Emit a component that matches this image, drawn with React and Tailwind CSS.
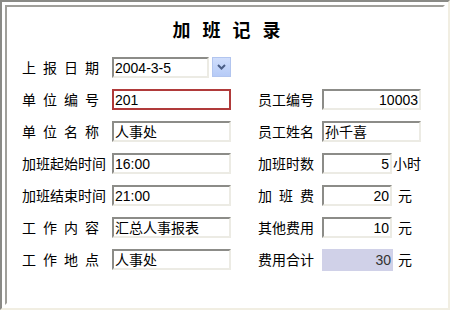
import React from "react";

const FONT = { fontFamily: '"Liberation Sans", "Noto Sans CJK SC", sans-serif' };

function Field({ value, w = "w-[119px]", right = false, red = false }) {
  const border = red
    ? "border-2 border-[#b03a3a]"
    : "border-2 border-t-[#8c8c88] border-l-[#8c8c88] border-r-[#ecebe4] border-b-[#ecebe4]";
  return (
    <div
      className={`${w} h-[21px] bg-white ${border} flex items-center ${right ? "justify-end pr-[1px]" : "pl-[1px]"} text-[14px] leading-none text-black overflow-hidden whitespace-nowrap`}
    >
      {value}
    </div>
  );
}

function Label({ text, spaced = false, w }) {
  return (
    <div
      className={`${w} text-[14px] leading-none text-black whitespace-nowrap ${spaced ? "tracking-[7px]" : ""}`}
    >
      {text}
    </div>
  );
}

function Row({ children }) {
  return <div className="flex items-center h-[21px] pl-[15px]">{children}</div>;
}

export default function App() {
  return (
    <div
      className="w-[450px] h-[310px] bg-white border-2 border-t-[#8a8a86] border-l-[#8a8a86] border-r-[#f1eee2] border-b-[#f1eee2] p-[3px]"
      style={FONT}
    >
      <div className="h-full border-2 border-t-[#a09f9a] border-l-[#a09f9a] border-r-white border-b-white">
        <div className="mt-[14px] h-[20px] flex justify-center gap-[12px] text-[18px] leading-[20px] font-bold text-black pl-[3px]">
          <span>加</span>
          <span>班</span>
          <span>记</span>
          <span>录</span>
        </div>
        <div className="mt-[16px] flex flex-col gap-[11px]">
          <Row>
            <Label text="上报日期" spaced w="w-[90px]" />
            <Field value="2004-3-5" w="w-[97px]" />
            <div className="ml-[3px] w-[19px] h-[20px] self-start bg-gradient-to-b from-[#d0defc] to-[#b6cbf7] border border-[#b2c5ef] flex items-center justify-center">
              <svg width="9" height="6" viewBox="0 0 9 6">
                <path d="M1 1 L4.5 4.5 L8 1" fill="none" stroke="#4b5e86" strokeWidth="2" />
              </svg>
            </div>
          </Row>
          <Row>
            <Label text="单位编号" spaced w="w-[90px]" />
            <Field value="201" red />
            <div className="w-[27px]" />
            <Label text="员工编号" w="w-[64px]" />
            <Field value="10003" w="w-[99px]" right />
          </Row>
          <Row>
            <Label text="单位名称" spaced w="w-[90px]" />
            <Field value="人事处" />
            <div className="w-[27px]" />
            <Label text="员工姓名" w="w-[64px]" />
            <Field value="孙千喜" w="w-[99px]" />
          </Row>
          <Row>
            <Label text="加班起始时间" w="w-[90px]" />
            <Field value="16:00" />
            <div className="w-[27px]" />
            <Label text="加班时数" w="w-[64px]" />
            <Field value="5" w="w-[70px]" right />
            <span className="ml-[1px] text-[14px] leading-none">小时</span>
          </Row>
          <Row>
            <Label text="加班结束时间" w="w-[90px]" />
            <Field value="21:00" />
            <div className="w-[27px]" />
            <Label text="加班费" spaced w="w-[64px]" />
            <Field value="20" w="w-[70px]" right />
            <span className="ml-[6px] text-[14px] leading-none">元</span>
          </Row>
          <Row>
            <Label text="工作内容" spaced w="w-[90px]" />
            <Field value="汇总人事报表" />
            <div className="w-[27px]" />
            <Label text="其他费用" w="w-[64px]" />
            <Field value="10" w="w-[70px]" right />
            <span className="ml-[6px] text-[14px] leading-none">元</span>
          </Row>
          <Row>
            <Label text="工作地点" spaced w="w-[90px]" />
            <Field value="人事处" />
            <div className="w-[27px]" />
            <Label text="费用合计" w="w-[64px]" />
            <div className="w-[71px] h-[22px] bg-[#d0d1e8] flex items-center justify-end pr-[2px] text-[14px] leading-none text-[#333]">
              30
            </div>
            <span className="ml-[5px] text-[14px] leading-none">元</span>
          </Row>
        </div>
      </div>
    </div>
  );
}
